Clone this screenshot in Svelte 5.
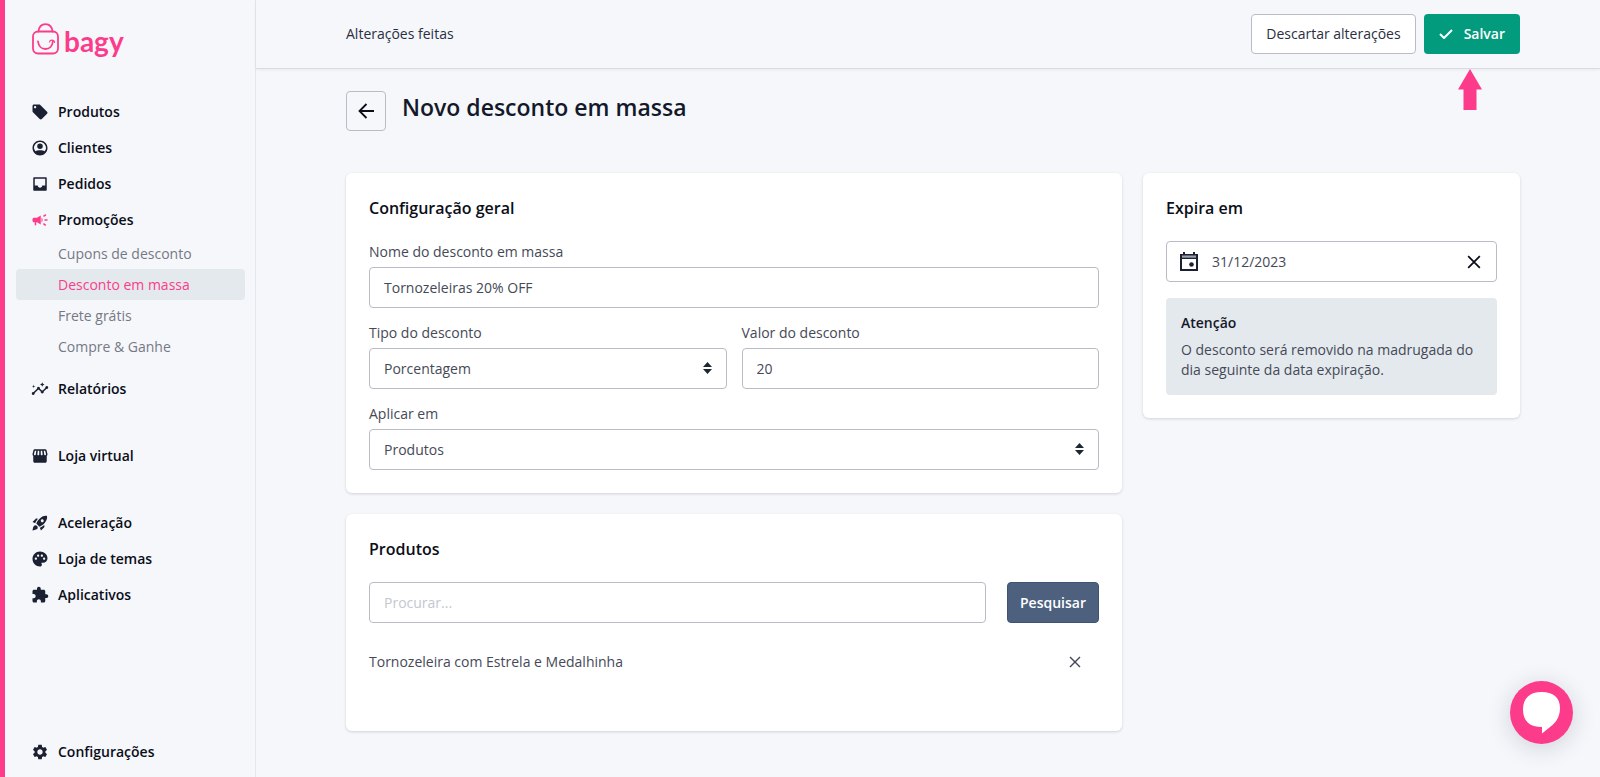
<script lang="ts">
  const icons: Record<string, string> = {
    tag: 'M21.41 11.58l-9-9C12.05 2.22 11.55 2 11 2H4c-1.1 0-2 .9-2 2v7c0 .55.22 1.05.59 1.42l9 9c.36.36.86.58 1.41.58s1.05-.22 1.41-.59l7-7c.37-.36.59-.86.59-1.41s-.23-1.06-.59-1.42zM5.5 7C4.67 7 4 6.33 4 5.5S4.67 4 5.5 4 7 4.67 7 5.5 6.33 7 5.5 7z',
    person: 'M12 2C6.48 2 2 6.48 2 12s4.48 10 10 10 10-4.48 10-10S17.52 2 12 2zM6 16.3A7.95 7.95 0 0 1 4 12c0-4.41 3.59-8 8-8s8 3.59 8 8c0 1.600-.8 3.100-2 4.300C16.700 15.400 14.500 15 12 15s-4.700.4-6 1.300zM12 6a3.700 3.700 0 1 0 0 7.400A3.700 3.700 0 0 0 12 6z',
    inbox: 'M20 3H4c-.55 0-1 .45-1 1v16c0 .55.45 1 1 1h16c.55 0 1-.45 1-1V4c0-.55-.45-1-1-1zm-1 11h-4c0 1.660-1.350 3-3 3s-3-1.340-3-3H5V5h14v9z',
    campaign: 'M18 11v2h4v-2h-4zm-2 6.610c.96.71 2.210 1.650 3.200 2.390.4-.53.8-1.070 1.200-1.600-.99-.74-2.240-1.680-3.200-2.400-.4.540-.8 1.080-1.200 1.610zM20.400 5.600c-.4-.53-.8-1.070-1.200-1.600-.99.740-2.240 1.680-3.200 2.400.4.530.8 1.070 1.200 1.600.96-.72 2.210-1.650 3.200-2.400zM4 9c-1.100 0-2 .9-2 2v2c0 1.100.9 2 2 2h1v4h2v-4h1l5 3V6L8 9H4zm11.500 3c0-1.330-.58-2.530-1.500-3.350v6.690c.92-.81 1.500-2.010 1.500-3.340z',
    insights: 'M21 8c-1.450 0-2.260 1.440-1.930 2.510l-3.550 3.560c-.3-.09-.74-.09-1.040 0l-2.550-2.550C12.270 10.450 11.460 9 10 9c-1.450 0-2.270 1.440-1.930 2.520l-4.560 4.550C2.440 15.740 1 16.550 1 18c0 1.100.9 2 2 2 1.450 0 2.260-1.440 1.930-2.510l4.550-4.560c.3.090.74.090 1.040 0l2.550 2.550C12.730 16.550 13.540 18 15 18c1.450 0 2.270-1.440 1.930-2.520l3.560-3.550C21.560 12.260 23 11.450 23 10c0-1.100-.9-2-2-2zM15 9l.94-2.070L18 6l-2.060-.93L15 3l-.92 2.070L12 6l2.080.93zM3.500 11L4 9l2-.5L4 8l-.5-2L3 8l-2 .5L3 9z',
    store: 'M21.900 8.890l-1.050-4.370c-.22-.9-1-1.520-1.910-1.520H5.050c-.9 0-1.690.63-1.900 1.520L2.100 8.890c-.24 1.020-.02 2.060.62 2.880.08.110.19.190.28.290V19c0 1.100.9 2 2 2h14c1.100 0 2-.9 2-2v-6.940c.09-.09.2-.18.28-.28.640-.82.870-1.870.62-2.890zM18.910 4.990l1.050 4.370c.1.420.01.840-.25 1.170-.14.180-.44.470-.94.470-.61 0-1.140-.49-1.210-1.140L16.980 5l1.930-.01zM13 5h1.960l.54 4.520c.05.39-.07.78-.33 1.070-.22.260-.54.410-.95.410-.67 0-1.220-.59-1.220-1.310V5zM8.490 9.520L9.040 5H11v4.690c0 .72-.55 1.310-1.290 1.310-.34 0-.65-.15-.89-.41-.25-.29-.37-.68-.33-1.070zM4.040 9.360L5.050 5h1.970l-.58 4.860c-.08.650-.6 1.140-1.210 1.140-.49 0-.8-.29-.93-.47-.27-.32-.36-.75-.26-1.170z',
    rocket: 'M9.190 6.350c-2.040 2.290-3.440 5.580-3.570 5.890L2 10.690l4.050-4.050c.47-.47 1.150-.68 1.810-.55l1.330.26zM11.170 17s3.740-1.550 5.890-3.700c5.400-5.400 4.500-9.620 4.210-10.570-.95-.3-5.170-1.190-10.570 4.210C8.550 9.090 7 12.830 7 12.830L11.170 17zm6.480-2.190c-2.290 2.040-5.580 3.440-5.890 3.570L13.310 22l4.050-4.050c.47-.47.68-1.150.55-1.810l-.26-1.330zM9 18c0 .83-.34 1.580-.88 2.120C6.940 21.300 2 22 2 22s.7-4.940 1.880-6.120A2.996 2.996 0 0 1 9 18zm4-9c0-1.100.9-2 2-2s2 .9 2 2-.9 2-2 2-2-.9-2-2z',
    palette: 'M12 2C6.490 2 2 6.490 2 12s4.490 10 10 10c1.380 0 2.500-1.120 2.500-2.500 0-.61-.23-1.200-.64-1.670-.08-.1-.13-.21-.13-.33 0-.28.22-.5.5-.5H16c3.310 0 6-2.690 6-6 0-4.960-4.490-9-10-9zM6.500 13c-.83 0-1.500-.67-1.500-1.500S5.670 10 6.500 10s1.500.67 1.500 1.500S7.330 13 6.500 13zm3-4C8.670 9 8 8.330 8 7.500S8.670 6 9.500 6s1.500.67 1.500 1.500S10.330 9 9.500 9zm5 0c-.83 0-1.500-.67-1.500-1.500S13.670 6 14.500 6s1.500.67 1.500 1.500S15.330 9 14.500 9zm3 4c-.83 0-1.500-.67-1.500-1.500s.67-1.500 1.500-1.500 1.500.67 1.500 1.500-.67 1.500-1.500 1.500z',
    puzzle: 'M20.500 11H19V7c0-1.100-.9-2-2-2h-4V3.500C13 2.120 11.880 1 10.500 1S8 2.120 8 3.500V5H4c-1.100 0-1.990.9-1.990 2v3.800H3.500c1.490 0 2.700 1.210 2.700 2.700s-1.210 2.700-2.700 2.700H2V20c0 1.100.9 2 2 2h3.800v-1.500c0-1.490 1.210-2.700 2.700-2.700 1.490 0 2.700 1.210 2.700 2.700V22H17c1.100 0 2-.9 2-2v-4h1.500c1.380 0 2.500-1.120 2.500-2.500S21.880 11 20.500 11z',
    gear: 'M19.140 12.940c.04-.3.060-.61.060-.94 0-.32-.02-.64-.07-.94l2.030-1.580c.18-.14.23-.41.120-.61l-1.920-3.320c-.12-.22-.37-.29-.59-.22l-2.390.96c-.5-.38-1.030-.7-1.620-.94l-.36-2.540c-.04-.24-.24-.41-.48-.41h-3.840c-.24 0-.43.17-.47.41l-.36 2.540c-.59.24-1.130.57-1.620.94l-2.390-.96c-.22-.08-.47 0-.59.22L2.740 8.870c-.12.21-.08.470.12.610l2.030 1.580c-.05.3-.09.63-.09.94s.02.640.07.940l-2.030 1.580c-.18.140-.23.410-.12.610l1.920 3.320c.12.220.37.290.59.220l2.390-.96c.5.380 1.030.7 1.620.940l.36 2.540c.05.240.24.410.48.410h3.840c.24 0 .44-.17.470-.41l.36-2.540c.59-.24 1.130-.56 1.620-.94l2.390.96c.22.080.47 0 .59-.22l1.920-3.320c.12-.22.070-.47-.12-.61l-2.010-1.580zM12 15.600c-1.980 0-3.600-1.620-3.600-3.600s1.620-3.600 3.600-3.600 3.600 1.620 3.600 3.600-1.620 3.600-3.600 3.600z',
  };

  type Item = { label: string; icon: string; active?: boolean; children?: { label: string; active?: boolean }[] };
  const groups: Item[][] = [
    [
      { label: 'Produtos', icon: 'tag' },
      { label: 'Clientes', icon: 'person' },
      { label: 'Pedidos', icon: 'inbox' },
      {
        label: 'Promoções',
        icon: 'campaign',
        active: true,
        children: [
          { label: 'Cupons de desconto' },
          { label: 'Desconto em massa', active: true },
          { label: 'Frete grátis' },
          { label: 'Compre & Ganhe' },
        ],
      },
      { label: 'Relatórios', icon: 'insights' },
    ],
    [{ label: 'Loja virtual', icon: 'store' }],
    [
      { label: 'Aceleração', icon: 'rocket' },
      { label: 'Loja de temas', icon: 'palette' },
      { label: 'Aplicativos', icon: 'puzzle' },
    ],
    [{ label: 'Configurações', icon: 'gear' }],
  ];

  let name = $state('Tornozeleiras 20% OFF');
  let value = $state('20');
  let expires = $state('31/12/2023');
  let query = $state('');
  let products = $state(['Tornozeleira com Estrela e Medalhinha']);
</script>

{#snippet sorter()}
  <svg class="sorter" viewBox="0 0 9 12" aria-hidden="true"><path d="M4.500 0L9 5H0zM4.500 12L0 7h9z" /></svg>
{/snippet}

<div class="app">
  <aside>
    <a class="logo" href="#inicio">
      <svg viewBox="0 0 27 32" aria-hidden="true">
        <rect x="1" y="8.500" width="25" height="22" rx="5" />
        <path d="M6.500 8.500C7 4 9.500 1.200 13.500 1.200S20 4 20.500 8.500" />
        <path d="M6 18.500c.5 4.500 3.500 7.500 7.500 7.500s7-3 7.300-7.500" />
        <path class="thin" d="M17.500 19c.5-2.500 4.500-2.800 5 .3" />
      </svg>
      <span>bagy</span>
    </a>
    <nav>
      {#each groups as group}
        <ul class="group">
          {#each group as item}
            <li>
              <a class="item" class:active={item.active} href="#{item.icon}">
                <svg viewBox="0 0 24 24" aria-hidden="true"><path fill-rule="evenodd" d={icons[item.icon]} /></svg>
                {item.label}
              </a>
              {#if item.children}
                <ul class="sub">
                  {#each item.children as child}
                    <li><a class:current={child.active} href="#promocoes">{child.label}</a></li>
                  {/each}
                </ul>
              {/if}
            </li>
          {/each}
        </ul>
      {/each}
    </nav>
  </aside>

  <div class="page">
    <header>
      <span>Alterações feitas</span>
      <div class="actions">
        <button type="button" class="btn outline">Descartar alterações</button>
        <div class="save">
          <button type="button" class="btn green">
            <svg viewBox="0 0 14 10" aria-hidden="true"><path d="M1 5l4 4 8-8" /></svg>
            Salvar
          </button>
          <svg class="pointer" viewBox="0 0 24 41" aria-hidden="true"><path d="M12 0l12 20.500h-5.500V41h-13V20.500H0z" /></svg>
        </div>
      </div>
    </header>

    <main>
      <div class="title">
        <button type="button" class="back" aria-label="Voltar">
          <svg viewBox="0 0 16 16" aria-hidden="true"><path d="M16 8H1.500M8.500 1L1.500 8l7 7" /></svg>
        </button>
        <h1>Novo desconto em massa</h1>
      </div>

      <div class="columns">
        <div class="stack">
          <section class="card">
            <h2>Configuração geral</h2>
            <div class="fields">
              <div class="field wide">
                <label for="name">Nome do desconto em massa</label>
                <input id="name" class="control" bind:value={name} />
              </div>
              <div class="field">
                <label for="kind">Tipo do desconto</label>
                <div class="select">
                  <select id="kind" class="control"><option>Porcentagem</option><option>Valor fixo</option></select>
                  {@render sorter()}
                </div>
              </div>
              <div class="field">
                <label for="value">Valor do desconto</label>
                <input id="value" class="control" bind:value />
              </div>
              <div class="field wide">
                <label for="target">Aplicar em</label>
                <div class="select">
                  <select id="target" class="control"><option>Produtos</option><option>Categorias</option></select>
                  {@render sorter()}
                </div>
              </div>
            </div>
          </section>

          <section class="card products">
            <h2>Produtos</h2>
            <form class="search" onsubmit={(e) => e.preventDefault()}>
              <input class="control" aria-label="Procurar" placeholder="Procurar..." bind:value={query} />
              <button type="submit" class="btn slate">Pesquisar</button>
            </form>
            <ul>
              {#each products as product}
                <li>
                  <span>{product}</span>
                  <button type="button" class="icon" aria-label="Remover" onclick={() => (products = products.filter((p) => p !== product))}>
                    <svg viewBox="0 0 12 12" aria-hidden="true"><path d="M1 1l10 10M11 1L1 11" /></svg>
                  </button>
                </li>
              {/each}
            </ul>
          </section>
        </div>

        <section class="card">
          <h2 id="expires">Expira em</h2>
          <div class="date">
            <svg class="calendar" viewBox="0 0 18 19" aria-hidden="true">
              <path d="M1 3h16v15H1z" fill="none" stroke="#1b2033" stroke-width="2" />
              <path d="M2 3.500h14v2H2z" fill="#9aa3b0" />
              <path d="M3 0h2v3H3zM13 0h2v3h-2zM1 5.500h16V7H1z" />
              <circle cx="11.500" cy="12.500" r="2.300" />
            </svg>
            <input aria-labelledby="expires" bind:value={expires} />
            <button type="button" class="icon dark" aria-label="Limpar data" onclick={() => (expires = '')}>
              <svg viewBox="0 0 12 12" aria-hidden="true"><path d="M1 1l10 10M11 1L1 11" /></svg>
            </button>
          </div>
          <div class="notice">
            <strong>Atenção</strong>
            <p>O desconto será removido na madrugada do dia seguinte da data expiração.</p>
          </div>
        </section>
      </div>
    </main>
  </div>

  <button type="button" class="chat" aria-label="Abrir chat">
    <svg viewBox="0 0 37 42" aria-hidden="true"><path d="M18.500 0C30 0 37 5.500 37 16c0 8-3.500 13.500-7.500 17L19 41.500V35C7 35 0 29.500 0 17.500 0 6 7 0 18.500 0z" /></svg>
  </button>
</div>

<style>
  :global(body) {
    margin: 0;
    background: #f5f7fb;
  }
  .app {
    --pink: #fc3c8b;
    --ink: #14182a;
    display: flex;
    min-height: 100vh;
    box-sizing: border-box;
    border-left: 5px solid var(--pink);
    font: 400 14px/20px 'Open Sans', 'Noto Sans', sans-serif;
    color: #454957;
  }
  .app :global(*) {
    box-sizing: border-box;
  }
  ul {
    list-style: none;
    margin: 0;
    padding: 0;
  }
  a {
    color: inherit;
    text-decoration: none;
  }
  button,
  input,
  select {
    font: inherit;
    color: inherit;
  }
  button {
    cursor: pointer;
  }
  svg {
    display: block;
    flex: none;
  }

  aside {
    display: flex;
    flex-direction: column;
    flex: none;
    width: 251px;
    padding: 23px 10px 7px 11px;
    border-right: 1px solid #e4e7ee;
  }
  .logo {
    display: flex;
    gap: 5px;
    height: 40px;
    margin: 0 0 31px 16px;
    color: var(--pink);
    font: 700 28px/36px Lato, sans-serif;
  }
  .logo svg {
    width: 27px;
    height: 32px;
    fill: none;
    stroke: currentColor;
    stroke-width: 1.8;
    stroke-linecap: round;
  }
  .logo .thin {
    stroke-width: 1.2;
  }
  nav {
    display: flex;
    flex: 1;
    flex-direction: column;
    gap: 31px;
  }
  .group:last-child {
    margin-top: auto;
  }
  .item {
    display: flex;
    align-items: center;
    gap: 9px;
    height: 36px;
    padding-left: 15px;
    font-weight: 600;
    color: #0b0e18;
  }
  .item svg {
    width: 18px;
    height: 18px;
    fill: #1b2033;
  }
  .item.active svg {
    fill: var(--pink);
  }
  .sub {
    margin-bottom: 9px;
  }
  .sub a {
    display: block;
    padding-left: 42px;
    border-radius: 4px;
    line-height: 31px;
    color: #757985;
  }
  .sub .current {
    background: #e4e9ed;
    color: var(--pink);
  }

  .page {
    flex: 1;
    min-width: 0;
  }
  header {
    display: flex;
    justify-content: space-between;
    align-items: center;
    height: 69px;
    padding: 0 80px 0 90px;
    border-bottom: 1px solid #d9dbe2;
    box-shadow: 0 1px 3px rgba(20, 24, 42, 0.06);
    color: #2a2f3f;
  }
  .actions {
    display: flex;
    gap: 8px;
  }
  .save {
    position: relative;
  }
  .pointer {
    position: absolute;
    top: 55px;
    left: 34px;
    width: 24px;
    height: 41px;
    fill: var(--pink);
  }
  .btn {
    display: flex;
    align-items: center;
    justify-content: center;
    height: 40px;
    padding: 0 14px;
    border: 1px solid transparent;
    border-radius: 4px;
    white-space: nowrap;
  }
  .outline {
    background: #fff;
    border-color: #b9bcc4;
  }
  .green {
    gap: 11px;
    background: #029b7d;
    color: #fff;
    font-weight: 600;
  }
  .green svg {
    width: 14px;
    height: 10px;
    fill: none;
    stroke: #fff;
    stroke-width: 2;
  }
  .slate {
    height: 41px;
    padding: 0 12px;
    background: #4d617f;
    border-color: #3f5375;
    color: #fff;
    font-weight: 600;
  }

  main {
    padding: 22px 80px 46px 90px;
  }
  .title {
    display: flex;
    gap: 16px;
    margin-bottom: 42px;
  }
  .back {
    display: grid;
    place-items: center;
    width: 40px;
    height: 40px;
    padding: 0;
    border: 1px solid #b9bcc4;
    border-radius: 4px;
    background: transparent;
  }
  .back svg {
    width: 16px;
    height: 16px;
    fill: none;
    stroke: #0b0e18;
    stroke-width: 1.8;
  }
  h1 {
    margin: 0;
    font-size: 23px;
    line-height: 32px;
    font-weight: 600;
    color: var(--ink);
  }
  .columns {
    display: grid;
    grid-template-columns: minmax(0, 776fr) minmax(0, 377fr);
    gap: 21px;
    align-items: start;
  }
  .stack {
    display: grid;
    gap: 21px;
  }
  .card {
    padding: 23px;
    border-radius: 6px;
    background: #fff;
    box-shadow: 0 1px 3px rgba(20, 24, 42, 0.16);
  }
  h2 {
    margin: 0 0 21px;
    font-size: 16px;
    line-height: 24px;
    font-weight: 600;
    color: #0b0e18;
  }
  .fields {
    display: grid;
    grid-template-columns: 1fr 1fr;
    gap: 14px 15px;
  }
  .field {
    display: grid;
    gap: 5px;
  }
  .field label {
    line-height: 21px;
  }
  .wide {
    grid-column: 1 / -1;
  }
  .control {
    display: block;
    width: 100%;
    min-width: 0;
    height: 41px;
    padding: 0 14px;
    border: 1px solid #b9bcc4;
    border-radius: 4px;
    background: #fff;
    appearance: none;
  }
  .control::placeholder {
    color: #c3c7cf;
  }
  .select {
    position: relative;
  }
  .sorter {
    position: absolute;
    top: 14px;
    right: 15px;
    width: 9px;
    height: 12px;
    fill: #1f2633;
    pointer-events: none;
  }
  .search {
    display: flex;
    gap: 21px;
  }
  .products ul {
    min-height: 58px;
    margin-top: 27px;
  }
  .products li {
    display: flex;
    justify-content: space-between;
    align-items: center;
    height: 24px;
    padding-right: 12px;
  }
  .icon {
    display: grid;
    place-items: center;
    width: 24px;
    height: 24px;
    padding: 0;
    border: 0;
    background: none;
  }
  .icon svg {
    width: 12px;
    height: 12px;
    fill: none;
    stroke: #3f4554;
    stroke-width: 1.4;
  }
  .icon.dark svg {
    width: 14px;
    height: 14px;
    stroke: #0b0e18;
    stroke-width: 1.5;
  }
  .date {
    display: flex;
    align-items: center;
    height: 41px;
    padding: 0 10px 0 13px;
    border: 1px solid #b9bcc4;
    border-radius: 4px;
  }
  .date input {
    flex: 1;
    min-width: 0;
    padding: 0 0 0 14px;
    border: 0;
    background: none;
  }
  .calendar {
    width: 18px;
    height: 19px;
    fill: #1b2033;
  }
  .notice {
    margin-top: 16px;
    padding: 15px;
    border-radius: 4px;
    background: #e4e9ee;
  }
  .notice strong {
    display: block;
    margin-bottom: 7px;
    font-weight: 600;
    color: var(--ink);
  }
  .notice p {
    margin: 0;
  }

  .chat {
    position: fixed;
    right: 27px;
    bottom: 33px;
    display: grid;
    place-items: center;
    width: 63px;
    height: 63px;
    padding: 0;
    border: 0;
    border-radius: 50%;
    background: var(--pink);
    box-shadow: 0 4px 24px rgba(20, 24, 42, 0.16);
  }
  .chat svg {
    width: 37px;
    height: 42px;
    fill: #fff;
  }
</style>
